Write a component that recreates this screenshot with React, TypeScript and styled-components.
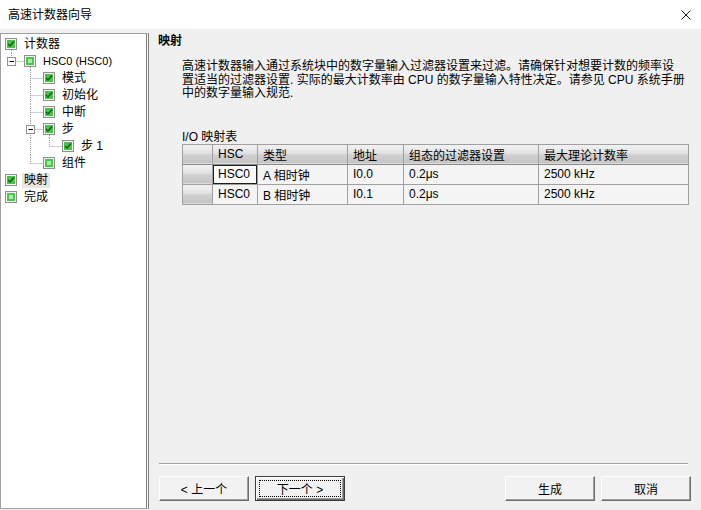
import React from "react";
import styled, { createGlobalStyle, css } from "styled-components";

const GlobalStyle = createGlobalStyle`
  html, body {
    margin: 0;
    padding: 0;
    background: #f0f0f0;
  }
  body {
    font-family: "Liberation Sans", "Noto Sans CJK SC", sans-serif;
    font-size: 12px;
    color: #000;
  }
`;

type TreeNode = {
  label: string;
  level: number;
  checked: boolean;
  last?: boolean;
  expander?: boolean;
  expanded?: boolean;
  guides?: number[];
  selected?: boolean;
  latin?: boolean;
};

const nodes: TreeNode[] = [
  { label: "计数器", level: 0, checked: true, expanded: true },
  { label: "HSC0 (HSC0)", level: 1, checked: false, last: true, expander: true, expanded: true, latin: true },
  { label: "模式", level: 2, checked: true },
  { label: "初始化", level: 2, checked: true },
  { label: "中断", level: 2, checked: true },
  { label: "步", level: 2, checked: true, expander: true, expanded: true },
  { label: "步 1", level: 3, checked: true, last: true, guides: [2] },
  { label: "组件", level: 2, checked: false, last: true },
  { label: "映射", level: 0, checked: true, selected: true },
  { label: "完成", level: 0, checked: false },
];

const columns = [
  { title: "", width: 30 },
  { title: "HSC", width: 45 },
  { title: "类型", width: 90 },
  { title: "地址", width: 56 },
  { title: "组态的过滤器设置", width: 135 },
  { title: "最大理论计数率", width: 150 },
];

const rows = [
  ["HSC0", "A 相时钟", "I0.0", "0.2μs", "2500 kHz"],
  ["HSC0", "B 相时钟", "I0.1", "0.2μs", "2500 kHz"],
];

const ROW_H = 17;
const MID = 8.5;
const cbX = (level: number) => 4 + 19 * level;
const jointX = (level: number) => 10 + 19 * (level - 1) + 0.5;

const CheckBox = ({ x, checked }: { x: number; checked: boolean }) => (
  <g>
    <rect x={x + 0.5} y={2.5} width={11} height={11} fill="#f6f6f6" stroke="#8e8f8f" />
    {checked ? (
      <>
        <rect x={x + 2} y={4} width={8} height={8} fill="#47c447" />
        <path
          d={`M${x + 3} ${8} L${x + 5} ${10} L${x + 9} ${5.5}`}
          fill="none"
          stroke="#0d5f0d"
          strokeWidth={1.4}
        />
      </>
    ) : (
      <>
        <rect x={x + 2} y={4} width={8} height={8} fill="#4cc54c" />
        <rect x={x + 4} y={6} width={4} height={4} fill="#a8eca2" />
      </>
    )}
  </g>
);

const TreeGlyphs = ({ node }: { node: TreeNode }) => {
  const x = cbX(node.level);
  const width = x + 13;
  const dot = { stroke: "#a0a0a0", strokeDasharray: "1 1", fill: "none" };
  const jx = jointX(node.level);
  return (
    <svg width={width} height={ROW_H} viewBox={`0 0 ${width} ${ROW_H}`}>
      {(node.guides || []).map((g) => (
        <line key={g} x1={jointX(g)} y1={0} x2={jointX(g)} y2={ROW_H} {...dot} />
      ))}
      {node.level > 0 && (
        <>
          <line x1={jx} y1={0} x2={jx} y2={node.last ? MID : ROW_H} {...dot} />
          <line x1={jx} y1={MID} x2={x} y2={MID} {...dot} />
        </>
      )}
      {node.level > 0 && node.expander && (
        <g>
          <rect x={jx - 4} y={4.5} width={8} height={8} fill="#fff" stroke="#919191" />
          <line x1={jx - 2} y1={MID} x2={jx + 2.5} y2={MID} stroke="#000" />
        </g>
      )}
      {node.expanded && (
        <line x1={x + 6.5} y1={14} x2={x + 6.5} y2={ROW_H} {...dot} />
      )}
      <CheckBox x={x} checked={node.checked} />
    </svg>
  );
};

const App = () => {
  return (
    <>
      <GlobalStyle />
      <Window>
        <TitleBar>
          <Title>高速计数器向导</Title>
          <svg width="10" height="10" viewBox="0 0 10 10">
            <path d="M0.5 0.5 L9.5 9.5 M9.5 0.5 L0.5 9.5" stroke="#1a1a1a" strokeWidth="1" />
          </svg>
        </TitleBar>

        <Body>
          <TreePanel>
            {nodes.map((node) => (
              <TreeRow key={node.label}>
                <TreeGlyphs node={node} />
                <TreeLabel $selected={node.selected} $latin={node.latin}>
                  {node.label}
                </TreeLabel>
              </TreeRow>
            ))}
          </TreePanel>

          <Content>
            <Heading>映射</Heading>
            <Paragraph>
              <Line>高速计数器输入通过系统块中的数字量输入过滤器设置来过滤。请确保针对想要计数的频率设</Line>
              <Line>置适当的过滤器设置. 实际的最大计数率由 CPU 的数字量输入特性决定。请参见 CPU 系统手册</Line>
              <Line>中的数字量输入规范.</Line>
            </Paragraph>

            <TableLabel>I/O 映射表</TableLabel>
            <Grid>
              <colgroup>
                {columns.map((c, i) => (
                  <col key={i} style={{ width: c.width }} />
                ))}
              </colgroup>
              <thead>
                <tr>
                  {columns.map((c, i) => (
                    <HeadCell key={i}>{c.title}</HeadCell>
                  ))}
                </tr>
              </thead>
              <tbody>
                {rows.map((r, ri) => (
                  <tr key={ri}>
                    <RowHeadCell />
                    {r.map((v, ci) => (
                      <Cell key={ci} $focused={ri === 0 && ci === 0}>
                        {v}
                      </Cell>
                    ))}
                  </tr>
                ))}
              </tbody>
            </Grid>

            <Footer>
              <Separator />
              <ButtonRow>
                <ButtonGroup>
                  <Button>&lt; 上一个</Button>
                  <Button $default>下一个 &gt;</Button>
                </ButtonGroup>
                <ButtonGroup>
                  <Button>生成</Button>
                  <Button>取消</Button>
                </ButtonGroup>
              </ButtonRow>
            </Footer>
          </Content>
        </Body>
      </Window>
    </>
  );
};

export default App;

const Window = styled.div`
  width: 701px;
  height: 510px;
  display: flex;
  flex-direction: column;
  background: #f0f0f0;
  overflow: hidden;
`;

const TitleBar = styled.div`
  height: 29px;
  flex: none;
  box-sizing: border-box;
  padding: 0 10px 0 8px;
  background: #fff;
  display: flex;
  align-items: center;
  justify-content: space-between;
`;

const Title = styled.span`
  font-size: 12px;
  line-height: 14px;
  color: #000;
`;

const Body = styled.div`
  flex: 1;
  min-height: 0;
  display: flex;
`;

const TreePanel = styled.div`
  width: 149px;
  flex: none;
  box-sizing: border-box;
  margin: 4px 0 1px 0;
  padding-top: 2px;
  background: #fff;
  border: 1px solid #a0a0a0;
  border-right: 3px double #7c7c7c;
`;

const TreeRow = styled.div`
  height: 17px;
  display: flex;
  align-items: center;
`;

const TreeLabel = styled.span<{ $selected?: boolean; $latin?: boolean }>`
  margin-left: 4px;
  padding: 0 2px;
  font-size: ${(p) => (p.$latin ? "11px" : "12px")};
  line-height: 15px;
  white-space: nowrap;
  ${(p) =>
    p.$selected &&
    css`
      background: #e6e6e6;
    `}
`;

const Content = styled.div`
  flex: 1;
  display: flex;
  flex-direction: column;
  padding: 5px 0 9px 0;
`;

const Heading = styled.div`
  margin-left: 9px;
  font-size: 12px;
  font-weight: bold;
  line-height: 14px;
`;

const Paragraph = styled.div`
  margin: 12px 0 0 33px;
  font-size: 12px;
  line-height: 13.5px;
`;

const Line = styled.div`
  white-space: nowrap;
`;

const TableLabel = styled.div`
  margin: 29px 0 0 33px;
  font-size: 12px;
  line-height: 14px;
`;

const Grid = styled.table`
  margin-left: 33px;
  width: 506px;
  table-layout: fixed;
  border-collapse: collapse;
  font-size: 12px;
  border: 1px solid #a0a0a0;
`;

const headBg = css`
  background: linear-gradient(to bottom, #f3f3f3 0%, #e3e3e3 45%, #d0d0d0 55%, #c4c4c4 100%);
`;

const HeadCell = styled.th`
  ${headBg};
  height: 19px;
  padding: 0 0 0 5px;
  text-align: left;
  font-weight: normal;
  white-space: nowrap;
  overflow: hidden;
  border-right: 1px solid #a0a0a0;
  border-bottom: 1px solid #8c8c8c;
`;

const RowHeadCell = styled.td`
  ${headBg};
  height: 19px;
  padding: 0;
  border-right: 1px solid #a0a0a0;
  border-bottom: 1px solid #a0a0a0;
`;

const Cell = styled.td<{ $focused?: boolean }>`
  height: 19px;
  padding: 0 0 0 5px;
  background: #f4f4f4;
  white-space: nowrap;
  overflow: hidden;
  border-right: 1px solid #a0a0a0;
  border-bottom: 1px solid #a0a0a0;
  ${(p) =>
    p.$focused &&
    css`
      box-shadow: inset 0 0 0 1px #1e1e1e;
      background: #fafafa;
    `}
`;

const Footer = styled.div`
  margin-top: auto;
`;

const Separator = styled.div`
  margin: 0 13px 0 10px;
  border-top: 1px solid #a0a0a0;
  border-bottom: 1px solid #fff;
`;

const ButtonRow = styled.div`
  margin-top: 11px;
  padding: 0 10px;
  display: flex;
  justify-content: space-between;
`;

const ButtonGroup = styled.div`
  display: flex;
  gap: 6px;
`;

const Button = styled.button<{ $default?: boolean }>`
  width: 90px;
  height: 25px;
  padding: 0;
  font-family: "Liberation Sans", "Noto Sans CJK SC", sans-serif;
  font-size: 12px;
  color: #000;
  background: #f2f2f2;
  border: 1px solid;
  border-color: #fff #6d6d6d #6d6d6d #fff;
  box-shadow: inset -1px -1px 0 #a0a0a0;
  ${(p) =>
    p.$default &&
    css`
      border-color: #3c3c3c;
      box-shadow: inset 1px 1px 0 #fff, inset -1px -1px 0 #6d6d6d, inset -2px -2px 0 #a0a0a0;
      outline: 1px dotted #000;
      outline-offset: -5px;
    `}
`;
